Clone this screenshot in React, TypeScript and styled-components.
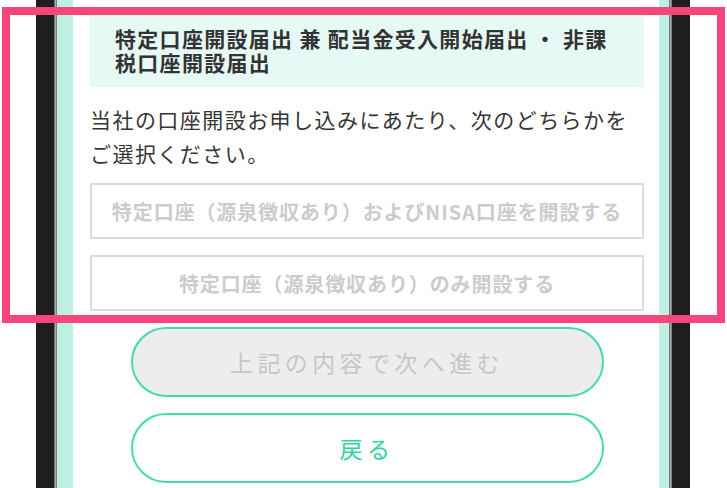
import styled, { createGlobalStyle } from 'styled-components';

const GlobalStyle = createGlobalStyle`
  html, body {
    margin: 0;
    padding: 0;
    background: #ffffff;
  }
  body {
    font-family: 'Noto Sans CJK JP', 'Noto Sans', sans-serif;
    color: #333333;
  }
`;

const choices = [
  '特定口座（源泉徴収あり）およびNISA口座を開設する',
  '特定口座（源泉徴収あり）のみ開設する',
];

export default function App() {
  return (
    <Page>
      <GlobalStyle />
      <Phone>
        <Bezel />
        <Edge />
        <Rail $width={16} />
        <Screen>
          <Column>
            <TitleBox>
              <Title>特定口座開設届出 兼 配当金受入開始届出 ・ 非課税口座開設届出</Title>
            </TitleBox>
            <Lead>
              当社の口座開設お申し込みにあたり、次のどちらかを
              <br />
              ご選択ください。
            </Lead>
            <Choices>
              {choices.map((c) => (
                <Choice key={c}>{c}</Choice>
              ))}
            </Choices>
            <Actions>
              <Pill $disabled>上記の内容で次へ進む</Pill>
              <Pill>戻る</Pill>
            </Actions>
          </Column>
        </Screen>
        <Rail $width={10} />
        <Edge />
        <Bezel />
      </Phone>
      <Highlight />
    </Page>
  );
}

const Page = styled.div`
  position: relative;
  width: 727px;
  height: 488px;
  overflow: hidden;
  background: #ffffff;
`;

const Phone = styled.div`
  display: flex;
  height: 100%;
  margin-left: 36px;
  width: 654px;
`;

const Bezel = styled.div`
  width: 18px;
  flex-shrink: 0;
  background: #1e1e1e;
`;

const Edge = styled.div`
  width: 3px;
  flex-shrink: 0;
  background: linear-gradient(90deg, #5a5a5a, #a8a8a8, #6a6a6a);
`;

const Rail = styled.div<{ $width: number }>`
  width: ${(p) => p.$width}px;
  flex-shrink: 0;
  background: #bdf0e2;
`;

const Screen = styled.div`
  flex: 1;
  background: #ffffff;
  padding: 12px 15px 0 17px;
`;

const Column = styled.div`
  display: flex;
  flex-direction: column;
`;

const TitleBox = styled.div`
  background: #e6f9f5;
  padding: 14px 25px 13px 25px;
`;

const Title = styled.h1`
  margin: 0;
  font-size: 21px;
  font-weight: 700;
  line-height: 24px;
  letter-spacing: 1.3px;
  color: #333333;
`;

const Lead = styled.p`
  margin: 15px 0 13px;
  font-size: 21px;
  line-height: 34px;
  letter-spacing: 1.45px;
  color: #363636;
`;

const Choices = styled.div`
  display: flex;
  flex-direction: column;
  gap: 16px;
`;

const Choice = styled.div`
  height: 56px;
  box-sizing: border-box;
  border: 2px solid #dcdcdc;
  display: flex;
  align-items: center;
  justify-content: center;
  font-size: 20px;
  font-weight: 700;
  letter-spacing: 0.9px;
  color: #cccccc;
`;

const Actions = styled.div`
  display: flex;
  flex-direction: column;
  align-items: center;
  gap: 16px;
  margin-top: 16px;
`;

const Pill = styled.div<{ $disabled?: boolean }>`
  width: 473px;
  height: 70px;
  box-sizing: border-box;
  border: 2px solid #45d9b3;
  border-radius: 35px;
  display: flex;
  align-items: center;
  justify-content: center;
  font-size: 23px;
  letter-spacing: 4.4px;
  background: ${(p) => (p.$disabled ? '#ededed' : '#ffffff')};
  color: ${(p) => (p.$disabled ? '#c6c6c6' : '#2fd3a7')};
`;

const Highlight = styled.div`
  position: absolute;
  left: 2px;
  top: 7px;
  width: 723px;
  height: 316px;
  box-sizing: border-box;
  border: 8px solid #f6457b;
  pointer-events: none;
`;
